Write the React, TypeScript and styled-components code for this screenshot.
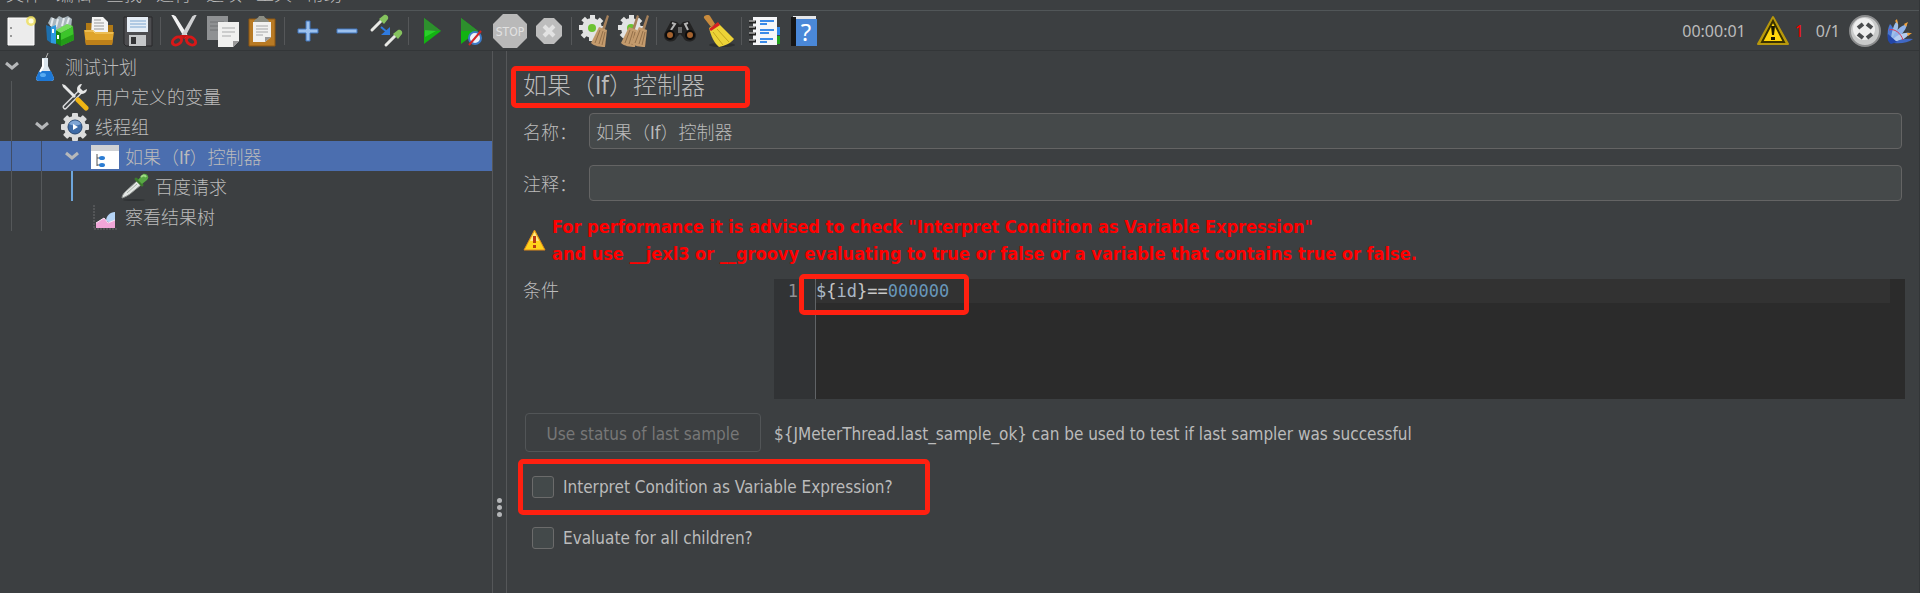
import React, { useState } from 'react';
import styled, { createGlobalStyle, css } from 'styled-components';

const uiFont = '"DejaVu Sans Condensed", "Noto Sans CJK SC", sans-serif';

const GlobalStyle = createGlobalStyle`
  *, *::before, *::after { box-sizing: border-box; }
  body {
    margin: 0;
    background: #3c3f41;
    color: #bbbbbb;
    font-family: ${uiFont};
    font-size: 17px;
  }
  button, input { font: inherit; color: inherit; }
`;

const Window = styled.div`
  min-height: 100vh;
  display: flex;
  flex-direction: column;
  border-right: 1px solid #333638;
`;

const MenuBar = styled.nav`
  height: 11px;
  display: flex;
  align-items: flex-end;
  gap: 14px;
  padding: 0 6px 3px;
  overflow: hidden;
  border-bottom: 1px solid #515658;
`;

const MenuItem = styled.button`
  flex: none;
  padding: 0;
  border: 0;
  background: none;
  font-size: 18px;
  line-height: 24px;
  font-weight: 300;
`;

const ToolBar = styled.header`
  height: 40px;
  display: flex;
  align-items: center;
  padding: 0 1px;
  border-bottom: 1px solid #333638;
`;

const ToolButton = styled.button`
  width: 39px;
  height: 38px;
  padding: 0;
  border: 0;
  background: none;
  display: flex;
  align-items: center;
  justify-content: center;
`;

const Separator = styled.span`
  width: 1px;
  height: 28px;
  margin: 0 3px;
  background: #555759;
`;

const Status = styled.div`
  margin-left: auto;
  display: flex;
  align-items: center;
  font-family: "Noto Sans", sans-serif;
  font-size: 16px;
`;

const Elapsed = styled.span`
  margin-right: 10px;
`;

const ErrorCount = styled.span`
  width: 26px;
  padding-left: 5px;
  color: #ff0000;
`;

const ThreadCount = styled.span`
  margin-right: 8px;
`;

const Logo = styled.span`
  width: 36px;
  display: flex;
  justify-content: center;
`;

const Workspace = styled.div`
  flex: 1;
  display: grid;
  grid-template-columns: 492px 15px minmax(0, 1fr);
`;

const Tree = styled.ul`
  margin: 0;
  padding: 0;
  list-style: none;
`;

const TreeRow = styled.li<{ $selected?: boolean }>`
  height: 30px;
  display: flex;
  align-items: center;
  background: ${p => (p.$selected ? '#4b6eaf' : 'transparent')};
`;

const Guide = styled.span<{ $tone: 'line' | 'active' | 'dark' }>`
  width: 30px;
  height: 30px;
  padding-left: 11px;
  &::before {
    content: "";
    display: block;
    width: ${p => (p.$tone === 'active' ? 2 : 1)}px;
    height: 100%;
    background: ${p => ({ line: '#55585a', active: '#6ea6dc', dark: '#3f4d68' })[p.$tone]};
  }
`;

const ToggleCell = styled.span`
  width: 24px;
  display: flex;
  justify-content: center;
`;

const IconCell = styled.span`
  width: 41px;
  height: 30px;
  padding-top: 2px;
  display: flex;
  align-items: center;
  justify-content: center;
`;

const TreeLabel = styled.span`
  padding-top: 4px;
  font-size: 18px;
  line-height: 24px;
  font-weight: 300;
`;

const Splitter = styled.div`
  border-left: 1px solid #555759;
  border-right: 1px solid #555759;
  display: flex;
  flex-direction: column;
  align-items: center;
  justify-content: flex-end;
  gap: 2px;
  padding-bottom: 76px;
`;

const SplitterDot = styled.span`
  width: 5px;
  height: 5px;
  border-radius: 50%;
  background: #b4b6b8;
`;

const Panel = styled.main`
  padding: 20px 14px 0 16px;
`;

const frame = css`
  &::after {
    content: "";
    position: absolute;
    border: 5px solid #ff2010;
    border-radius: 5px;
    pointer-events: none;
  }
`;

const Title = styled.h1`
  position: relative;
  margin: 0 0 12px;
  font-size: 24px;
  line-height: 30px;
  font-weight: 300;
  ${frame}
  &::after { left: -12px; top: -5px; width: 239px; height: 42px; }
`;

const Field = styled.div`
  display: grid;
  grid-template-columns: 66px minmax(0, 1fr);
  align-items: center;
  margin: 0 3px 16px 0;
  label { padding-top: 4px; }
`;

const FieldLabel = styled.label`
  font-size: 18px;
  line-height: 24px;
  font-weight: 300;
`;

const TextInput = styled.input`
  height: 36px;
  padding: 0 6px;
  border: 1px solid #646464;
  border-radius: 4px;
  background: #45494a;
  font-size: 18px;
  font-weight: 300;
  outline: 0;
`;

const Advice = styled.div`
  display: flex;
  align-items: center;
  gap: 6px;
  margin: -4px 0 12px;
`;

const AdviceText = styled.p`
  margin: 0;
  color: #ff0000;
  font-size: 18px;
  line-height: 27px;
  font-weight: 700;
`;

const Split = styled.div`
  display: grid;
  grid-template-columns: 251px minmax(0, 1fr);
  margin-bottom: 14px;
`;

const Editor = styled.div`
  min-height: 120px;
  display: grid;
  grid-template-columns: 42px minmax(0, 1fr);
  background: #2b2b2b;
  font-family: "DejaVu Sans Mono", monospace;
  font-size: 17px;
  line-height: 24px;
`;

const Gutter = styled.div`
  padding-right: 17px;
  text-align: right;
  background: #313335;
  border-right: 1px solid #606366;
  color: #909090;
`;

const CodeLine = styled.div`
  position: relative;
  height: 24px;
  margin-right: 15px;
  background: #323232;
  color: #c8c8c8;
  outline: 0;
  white-space: pre;
  ${frame}
  &::after { left: -17px; top: -5px; width: 170px; height: 41px; }
`;

const Token = styled.span<{ $kind: 'variable' | 'number' }>`
  color: ${p => (p.$kind === 'number' ? '#6897bb' : '#a9b7c6')};
`;

const StatusButton = styled.button`
  width: 236px;
  height: 39px;
  margin-left: 2px;
  padding: 2px 0 0;
  border: 1px solid #525557;
  border-radius: 4px;
  background: none;
  color: #777777;
`;

const Note = styled.span`
  align-self: center;
  padding-top: 2px;
  line-height: 24px;
`;

const Checks = styled.div`
  margin-top: -5px;
`;

const CheckRow = styled.label<{ $framed?: boolean }>`
  position: relative;
  height: 51px;
  padding-left: 9px;
  display: flex;
  align-items: center;
  gap: 9px;
  ${p => p.$framed && frame}
  &::after { left: -5px; top: -2px; width: 412px; height: 56px; }
`;

const CheckBox = styled.input`
  appearance: none;
  width: 22px;
  height: 22px;
  margin: 0;
  border: 1px solid #6b6b6b;
  border-radius: 3px;
  background: #43494a;
  &:checked { background: #4b6eaf; }
`;

/* ---------- icons ---------- */

const NewIcon = () => (
  <svg width="30" height="32" viewBox="0 0 30 32">
    <path d="M2 3h26v27H2z" fill="#ececec" stroke="#fff" />
    <path d="M5 12v2M5 20v2" stroke="#999" strokeWidth="2" />
    <circle cx="25" cy="6" r="5" fill="#efe05a" opacity=".8" />
    <circle cx="25" cy="6" r="2.500" fill="#fffde0" />
  </svg>
);

const TemplatesIcon = () => (
  <svg width="32" height="32" viewBox="0 0 32 32">
    <path d="M4 8l3-6 5 2 3-3 4 2 5-2 4 3-1 9-14 6z" fill="#a9b6bd" />
    <path d="M9 3l-2 8M14 4l-2 8M20 3l-2 8M25 3l-2 6" stroke="#e4eaee" strokeWidth="2" />
    <path d="M2 10l5 2v16l-4-3z" fill="#1d6fae" />
    <path d="M7 12l5-2v19l-5-1z" fill="#2d9ae0" />
    <path d="M12 15l5 3v13l-5-3z" fill="#188a12" />
    <path d="M17 18l12-7 1 14-13 6z" fill="#3cc52a" />
    <path d="M12 15l11-6 6 2-12 7z" fill="#72dd57" />
    <path d="M9 14v4M14 20v4" stroke="#fff" strokeWidth="2" />
    <path d="M17 25l13-6v6l-13 6z" fill="#239b18" />
  </svg>
);

const OpenIcon = () => (
  <svg width="32" height="32" viewBox="0 0 32 32">
    <path d="M3 8h6l2 2h19v8H3z" fill="#b17a16" />
    <path d="M9 2h11l5 5v12H8z" fill="#f4f4f4" />
    <path d="M11 5h7M11 8h10M11 11h10M11 14h10" stroke="#999" />
    <path d="M1 15h9l2 2h19l-2 13H3z" fill="#e0a52c" />
    <path d="M2 16h8l2 2h18" fill="none" stroke="#f8d57b" />
    <path d="M3 30h26l1-5H2z" fill="#be811a" />
  </svg>
);

const SaveIcon = () => (
  <svg width="32" height="32" viewBox="0 0 32 32">
    <path d="M2 2h28v29H4l-2-2z" fill="#4d4d50" stroke="#29292b" />
    <path d="M5 2h21v15H5z" fill="#e6eef6" />
    <path d="M8 6h16M8 9h16M8 12h16" stroke="#7ca6d0" />
    <path d="M7 20h17v11H7z" fill="#c5c7c9" />
    <path d="M9 22h5v7H9z" fill="#343436" />
  </svg>
);

const CutIcon = () => (
  <svg width="30" height="32" viewBox="0 0 30 32">
    <path d="M4 1l2 1 12 19-2 1z" fill="#f2f2f2" stroke="#f2f2f2" strokeWidth="2" />
    <path d="M26 1l-2 1-11 19 2 1z" fill="#cfd0d2" stroke="#cfd0d2" strokeWidth="2" />
    <ellipse cx="8" cy="26" rx="5" ry="3.500" fill="none" stroke="#d81818" strokeWidth="3" transform="rotate(-35 8 26)" />
    <ellipse cx="22" cy="26" rx="5" ry="3.500" fill="none" stroke="#d81818" strokeWidth="3" transform="rotate(35 22 26)" />
    <path d="M10 20h10l-5 4z" fill="#c91212" />
  </svg>
);

const CopyIcon = () => (
  <svg width="36" height="34" viewBox="0 0 36 34">
    <path d="M2 2h21v24H2z" fill="#8f9193" />
    <path d="M5 8h14M5 12h8M5 16h8" stroke="#707274" />
    <path d="M13 8h21v19l-6 6H13z" fill="#f0f0ef" />
    <path d="M17 14h13M17 18h13M17 22h9" stroke="#a9aaab" />
    <path d="M28 33v-6h6z" fill="#999" />
  </svg>
);

const PasteIcon = () => (
  <svg width="30" height="32" viewBox="0 0 30 32">
    <path d="M2 4h26v27H2z" fill="#b87a24" stroke="#8c5712" />
    <path d="M6 7h18v15l-6 5H6z" fill="#f1f1f0" />
    <path d="M7 7c0-3 4-3 5-6h5c1 3 5 3 5 6z" fill="#8b8d83" />
    <path d="M9 11h12M9 14h12M9 17h12M9 20h7" stroke="#a6a7a8" />
    <path d="M18 27v-5h6z" fill="#999" />
  </svg>
);

const PlusIcon = () => (
  <svg width="22" height="22" viewBox="0 0 22 22">
    <path d="M9 1h4v8h8v4h-8v8H9v-8H1V9h8z" fill="#9cc1ee" stroke="#3e74bd" />
  </svg>
);

const MinusIcon = () => (
  <svg width="22" height="22" viewBox="0 0 22 22">
    <path d="M1 9h20v4H1z" fill="#9cc1ee" stroke="#3e74bd" />
  </svg>
);

const Dropper = () => (
  <svg width="28" height="28" viewBox="0 0 28 28">
    <ellipse cx="13" cy="27" rx="11" ry="1" fill="#2f3234" />
    <path d="M1 25c0-3 2-5 4-7L16 8l4 4L9 21c-3 2-5 3-8 4z" fill="#e3e6e4" stroke="#8d918f" />
    <path d="M6 20L16 11" stroke="#a9b2aa" />
    <path d="M15 6l6 6" stroke="#3c7a2c" strokeWidth="3" strokeLinecap="round" />
    <path d="M17 7l4 4 5-4c3-3 0-7-4-6z" fill="#58a844" />
    <path d="M20 4c2-2 4-2 5 0" fill="none" stroke="#a2dc86" strokeWidth="2" />
  </svg>
);

const ToggleIcon = () => (
  <svg width="34" height="34" viewBox="0 0 34 34">
    <path d="M3 16L13 6" stroke="#e8e9e6" strokeWidth="3" strokeLinecap="round" />
    <path d="M10 5l5 5 4-5c1-3-2-5-4-4z" fill="#85c25e" />
    <path d="M17 31l10-10" stroke="#e8e9e6" strokeWidth="3" strokeLinecap="round" />
    <path d="M24 20l5 5 4-5c1-3-2-5-4-4z" fill="#85c25e" />
    <path d="M12 13l6 5" stroke="#2f7be0" strokeWidth="2" />
    <path d="M21 13v8h-9z" fill="#2f7be0" />
  </svg>
);

const StartIcon = () => (
  <svg width="24" height="30" viewBox="0 0 24 30">
    <path d="M4 2l17 13L4 28z" fill="#12b312" />
    <path d="M4 2l17 13H4z" fill="#2d8f2d" />
    <path d="M5 14l11 1-11 6z" fill="#3be03b" opacity=".6" />
  </svg>
);

const StartNoPauseIcon = () => (
  <svg width="26" height="30" viewBox="0 0 26 30">
    <path d="M3 2l17 13L3 28z" fill="#12b312" />
    <path d="M3 2l17 13H3z" fill="#2d8f2d" />
    <circle cx="17" cy="22" r="6" fill="#eef3fa" stroke="#3d7cc9" strokeWidth="2" />
    <path d="M11 29l12-14" stroke="#d02525" strokeWidth="2" />
  </svg>
);

const StopIcon = () => (
  <svg width="36" height="36" viewBox="0 0 36 36">
    <path d="M11 1h14l10 10v14L25 35H11L1 25V11z" fill="#b9b9b9" />
    <text x="18" y="23" textAnchor="middle" fontFamily="DejaVu Sans Condensed" fontSize="12" fill="#e2e2e2">STOP</text>
  </svg>
);

const ShutdownIcon = () => (
  <svg width="28" height="28" viewBox="0 0 28 28">
    <path d="M9 1h10l8 8v10l-8 8H9l-8-8V9z" fill="#bdbdbd" />
    <path d="M9 9l10 10M19 9L9 19" stroke="#e2e2e2" strokeWidth="4" />
  </svg>
);

const gearTeeth = [0, 45, 90, 135, 180, 225, 270, 315];

const Broom = ({ x }: { x: number }) => (
  <g transform={`translate(${x} 0)`}>
    <path d="M18 1l2 1-4 13h-3z" fill="#a5805a" />
    <path d="M10 13l8 3-2 17c-5 0-11-1-14-4z" fill="#c39a6c" />
    <path d="M11 16L6 29M14 17l-4 13M16 18l-3 13" stroke="#94704a" />
  </g>
);

const ClearIcon = ({ double }: { double?: boolean }) => (
  <svg width="34" height="34" viewBox="0 0 34 34">
    <g fill="#e2e3e3">
      {gearTeeth.map(a => <rect key={a} x="12" y="1" width="5" height="7" transform={`rotate(${a} 14 14)`} />)}
      <circle cx="14" cy="14" r="10" />
    </g>
    <circle cx="14" cy="14" r="4" fill="#6cc332" />
    {double && <Broom x={2} />}
    <Broom x={double ? 12 : 11} />
  </svg>
);

const SearchIcon = () => (
  <svg width="34" height="26" viewBox="0 0 34 26">
    <path d="M8 3l6 1 3 3 3-3 6-1 7 13c1 9-11 10-13 3l-3-3-3 3c-2 7-14 6-13-3z" fill="#222" />
    <path d="M9 5l3 1-4 6M25 5l-3 1 3 6" fill="none" stroke="#b5b5b5" strokeWidth="2" />
    <circle cx="7" cy="17" r="4" fill="#a4622e" stroke="#0c0c0c" strokeWidth="2" />
    <circle cx="27" cy="17" r="4" fill="#a4622e" stroke="#0c0c0c" strokeWidth="2" />
    <path d="M15 9h4v6h-4z" fill="#666" />
  </svg>
);

const BrushIcon = () => (
  <svg width="34" height="34" viewBox="0 0 34 34">
    <ellipse cx="20" cy="31" rx="13" ry="2" fill="#2d2f31" />
    <path d="M2 4c-1-3 5-4 6-2l5 8-4 3z" fill="#c98b3d" />
    <path d="M7 14l9-5 16 16c-4 5-10 7-15 8C12 29 9 22 7 14z" fill="#edd337" />
    <path d="M11 18l10 13M15 15l12 13" stroke="#c2a41c" />
    <path d="M7 15l9-7 2 3-9 6z" fill="#d62222" />
  </svg>
);

const FunctionIcon = () => (
  <svg width="34" height="32" viewBox="0 0 34 32">
    <path d="M26 12h6v8h-6z" fill="#2f86e8" />
    <path d="M26 21h6v8h-6z" fill="#22a31d" />
    <path d="M5 2h24v28H5z" fill="#f5f6f8" />
    <path d="M1 7h7M1 13h7M1 19h7M1 26h7" stroke="#222" strokeWidth="3" />
    <path d="M1 6h6M1 12h6M1 18h6M1 25h6" stroke="#ddd" />
    <path d="M12 6h14M12 9h7M12 15h14M12 18h9M12 24h13M12 27h7" stroke="#3a8ae8" strokeWidth="2" />
  </svg>
);

const HelpIcon = () => (
  <svg width="30" height="32" viewBox="0 0 30 32">
    <path d="M4 1h23v3H4z" fill="#e4e6ea" />
    <path d="M2 2h5v29H2z" fill="#161616" />
    <path d="M7 4h21v27H7z" fill="#4a88d8" />
    <text x="17" y="26" textAnchor="middle" fontFamily="Noto Sans" fontSize="24" fill="#fff">?</text>
  </svg>
);

const WarningIcon = ({ bright }: { bright?: boolean }) => (
  bright ? (
    <svg width="23" height="22" viewBox="0 0 23 22">
      <path d="M11.500 1L22 21H1z" fill="#ffd21c" stroke="#e08a1a" strokeLinejoin="round" />
      <path d="M11.500 3L16 12H7z" fill="#ffeeb0" opacity=".7" />
      <path d="M11.500 7v7M11.500 16v3" stroke="#b83a14" strokeWidth="3" />
    </svg>
  ) : (
    <svg width="34" height="32" viewBox="0 0 34 32">
      <path d="M17 2l15 27H2z" fill="#c9a90c" stroke="#b8980c" strokeWidth="2" strokeLinejoin="round" />
      <path d="M17 6l11 21H6z" fill="#ffd60c" stroke="#3a3200" strokeWidth="2" />
      <path d="M15 11h4l-1 9h-2zM15 22h4v3h-4z" fill="#1b1800" />
    </svg>
  )
);

const EngineIcon = () => (
  <svg width="34" height="34" viewBox="0 0 34 34">
    <circle cx="17" cy="17" r="15" fill="#c9caca" stroke="#8c8d8e" strokeWidth="2" />
    <circle cx="16" cy="15" r="11" fill="#eeeeee" />
    <path d="M10 14l5-4M19 10l5 4M10 20l5 4M19 24l5-4" stroke="#4a4c4e" strokeWidth="4" />
  </svg>
);

const FeatherIcon = () => (
  <svg width="28" height="26" viewBox="0 0 28 26">
    <path d="M2 20C1 14 2 10 4 6c4 4 5 9 3 13z" fill="#4a78d4" />
    <path d="M5 20C6 12 8 6 11 3c3 5 0 12-4 18z" fill="#9fbfe8" />
    <path d="M6 21c3-8 8-13 15-15-1 7-7 12-12 16z" fill="#8fb2ea" />
    <path d="M6 22c6-6 12-8 18-7-4 6-10 8-17 9z" fill="#b4cdf0" />
    <path d="M8 24c7-3 12-4 19-3-5 4-13 5-19 4z" fill="#4068c4" />
    <path d="M9 3l2-2 1 5zM18 6l4-2-2 5zM21 15l5 0-4 3z" fill="#f2a23a" />
    <path d="M3 12c5-2 12 3 14 10" fill="none" stroke="#d13c5a" />
    <path d="M2 16l9 8-6 2c-3-2-4-5-3-10z" fill="#2346a8" />
  </svg>
);

const FlaskIcon = () => (
  <svg width="20" height="28" viewBox="0 0 20 28">
    <path d="M13 0l-3 7" stroke="#b5b5b5" />
    <path d="M7 5h6v8l6 12c0 2-1 3-3 3H4c-2 0-3-1-3-3l6-12z" fill="#dce6ee" />
    <path d="M4 18h12l3 7c0 2-1 3-3 3H4c-2 0-3-1-3-3z" fill="#1d78d6" />
    <path d="M8 6v8l-3 5" fill="none" stroke="#fff" strokeWidth="2" />
    <ellipse cx="8" cy="22" rx="3" ry="2" fill="#58abf2" />
  </svg>
);

const ToolsIcon = () => (
  <svg width="28" height="28" viewBox="0 0 28 28">
    <path d="M4 24L19 9" stroke="#d9dadb" strokeWidth="5" strokeLinecap="round" />
    <path d="M4 24L18 10" stroke="#3c3f41" strokeWidth="2" strokeLinecap="round" />
    <path d="M26 6a5 5 0 1 1-5-5l-2 4 3 3z" fill="#e6e7e7" />
    <path d="M1 1l3 1 11 11-2 2L2 4z" fill="#e6e7e7" />
    <path d="M17 17l8 8" stroke="#f0b514" strokeWidth="5" strokeLinecap="round" />
  </svg>
);

const GearIcon = () => (
  <svg width="28" height="28" viewBox="0 0 28 28">
    <g fill="#dcdddd">
      {gearTeeth.map(a => <rect key={a} x="11" y="0" width="6" height="8" rx="1" transform={`rotate(${a} 14 14)`} />)}
      <circle cx="14" cy="14" r="11" />
    </g>
    <circle cx="14" cy="14" r="7" fill="#3e6ba6" stroke="#27466f" />
    <path d="M8 11a7 7 0 0 1 12 0c-4 2-8 2-12 0z" fill="#7fa5d4" />
    <path d="M12 11l5 3-5 3z" fill="#fff" />
  </svg>
);

const ControllerIcon = () => (
  <svg width="28" height="26" viewBox="0 0 28 26">
    <path d="M0 1h28v24H0z" fill="#fff" />
    <path d="M0 1h28v6H0z" fill="#cfd1d4" />
    <path d="M6 10v12M6 14h3M6 21h3" stroke="#555" fill="none" />
    <ellipse cx="11" cy="14" rx="3" ry="2" fill="#2b7cd3" />
    <ellipse cx="11" cy="21" rx="3" ry="2" fill="#2b7cd3" />
  </svg>
);

const ReportIcon = () => (
  <svg width="26" height="26" viewBox="0 0 26 26">
    <path d="M2 1v24h23" fill="none" stroke="#6b6d6f" strokeDasharray="2 1" />
    <path d="M14 17c0-5 4-9 9-9v13z" fill="#b5d4f6" />
    <path d="M4 24v-5l8-5 4 5 7-3v8z" fill="#f0a6d8" />
    <path d="M4 19l8-5 4 5 7-3" fill="none" stroke="#fce6f5" />
  </svg>
);

const Chevron = () => (
  <svg width="16" height="10" viewBox="0 0 16 10">
    <path d="M2 2l6 5 6-5" fill="none" stroke="#b6b8ba" strokeWidth="3" />
  </svg>
);

/* ---------- data ---------- */

const menus = ['文件', '编辑', '查找', '运行', '选项', '工具', '帮助'];

const toolGroups: { name: string; icon: React.ReactNode }[][] = [
  [
    { name: '新建', icon: <NewIcon /> },
    { name: '模板', icon: <TemplatesIcon /> },
    { name: '打开', icon: <OpenIcon /> },
    { name: '保存', icon: <SaveIcon /> },
  ],
  [
    { name: '剪切', icon: <CutIcon /> },
    { name: '复制', icon: <CopyIcon /> },
    { name: '粘贴', icon: <PasteIcon /> },
  ],
  [
    { name: '展开', icon: <PlusIcon /> },
    { name: '折叠', icon: <MinusIcon /> },
    { name: '切换', icon: <ToggleIcon /> },
  ],
  [
    { name: '启动', icon: <StartIcon /> },
    { name: '不停顿开始', icon: <StartNoPauseIcon /> },
    { name: '停止', icon: <StopIcon /> },
    { name: '关闭', icon: <ShutdownIcon /> },
  ],
  [
    { name: '清除', icon: <ClearIcon /> },
    { name: '清除全部', icon: <ClearIcon double /> },
  ],
  [
    { name: '搜索', icon: <SearchIcon /> },
    { name: '重置搜索', icon: <BrushIcon /> },
  ],
  [
    { name: '函数助手', icon: <FunctionIcon /> },
    { name: '帮助', icon: <HelpIcon /> },
  ],
];

type Tone = 'line' | 'active' | 'dark';

const nodes: { label: string; icon: React.ReactNode; guides: Tone[]; open?: boolean; selected?: boolean }[] = [
  { label: '测试计划', icon: <FlaskIcon />, guides: [], open: true },
  { label: '用户定义的变量', icon: <ToolsIcon />, guides: ['line'] },
  { label: '线程组', icon: <GearIcon />, guides: ['line'], open: true },
  { label: '如果（If）控制器', icon: <ControllerIcon />, guides: ['dark', 'dark'], open: true, selected: true },
  { label: '百度请求', icon: <Dropper />, guides: ['line', 'line', 'active'] },
  { label: '察看结果树', icon: <ReportIcon />, guides: ['line', 'line'] },
];

export default function App() {
  const [name, setName] = useState('如果（If）控制器');
  const [comment, setComment] = useState('');

  return (
    <Window>
      <GlobalStyle />
      <MenuBar>
        {menus.map(m => <MenuItem key={m}>{m}</MenuItem>)}
      </MenuBar>
      <ToolBar>
        {toolGroups.map((group, i) => (
          <React.Fragment key={i}>
            {i > 0 && <Separator />}
            {group.map(t => <ToolButton key={t.name} aria-label={t.name}>{t.icon}</ToolButton>)}
          </React.Fragment>
        ))}
        <Status>
          <Elapsed>00:00:01</Elapsed>
          <WarningIcon />
          <ErrorCount>1</ErrorCount>
          <ThreadCount>0/1</ThreadCount>
          <EngineIcon />
          <Logo><FeatherIcon /></Logo>
        </Status>
      </ToolBar>
      <Workspace>
        <Tree>
          {nodes.map(n => (
            <TreeRow key={n.label} $selected={n.selected}>
              {n.guides.map((tone, i) => <Guide key={i} $tone={tone} />)}
              <ToggleCell>{n.open && <Chevron />}</ToggleCell>
              <IconCell>{n.icon}</IconCell>
              <TreeLabel>{n.label}</TreeLabel>
            </TreeRow>
          ))}
        </Tree>
        <Splitter>
          <SplitterDot />
          <SplitterDot />
          <SplitterDot />
        </Splitter>
        <Panel>
          <Title>如果（If）控制器</Title>
          <Field>
            <FieldLabel htmlFor="name">名称：</FieldLabel>
            <TextInput id="name" value={name} onChange={e => setName(e.target.value)} />
          </Field>
          <Field>
            <FieldLabel htmlFor="comment">注释：</FieldLabel>
            <TextInput id="comment" value={comment} onChange={e => setComment(e.target.value)} />
          </Field>
          <Advice>
            <WarningIcon bright />
            <AdviceText>
              For performance it is advised to check "Interpret Condition as Variable Expression"
              <br />
              and use __jexl3 or __groovy evaluating to true or false or a variable that contains true or false.
            </AdviceText>
          </Advice>
          <Split>
            <FieldLabel as="span" id="condition">条件</FieldLabel>
            <Editor>
              <Gutter>1</Gutter>
              <CodeLine role="textbox" aria-labelledby="condition" contentEditable suppressContentEditableWarning spellCheck={false}>
                <Token $kind="variable">$</Token>{'{'}<Token $kind="variable">id</Token>{'}=='}<Token $kind="number">000000</Token>
              </CodeLine>
            </Editor>
          </Split>
          <Split>
            <StatusButton disabled>Use status of last sample</StatusButton>
            <Note>{'${JMeterThread.last_sample_ok} can be used to test if last sampler was successful'}</Note>
          </Split>
          <Checks>
            <CheckRow $framed>
              <CheckBox type="checkbox" />
              Interpret Condition as Variable Expression?
            </CheckRow>
            <CheckRow>
              <CheckBox type="checkbox" />
              Evaluate for all children?
            </CheckRow>
          </Checks>
        </Panel>
      </Workspace>
    </Window>
  );
}
